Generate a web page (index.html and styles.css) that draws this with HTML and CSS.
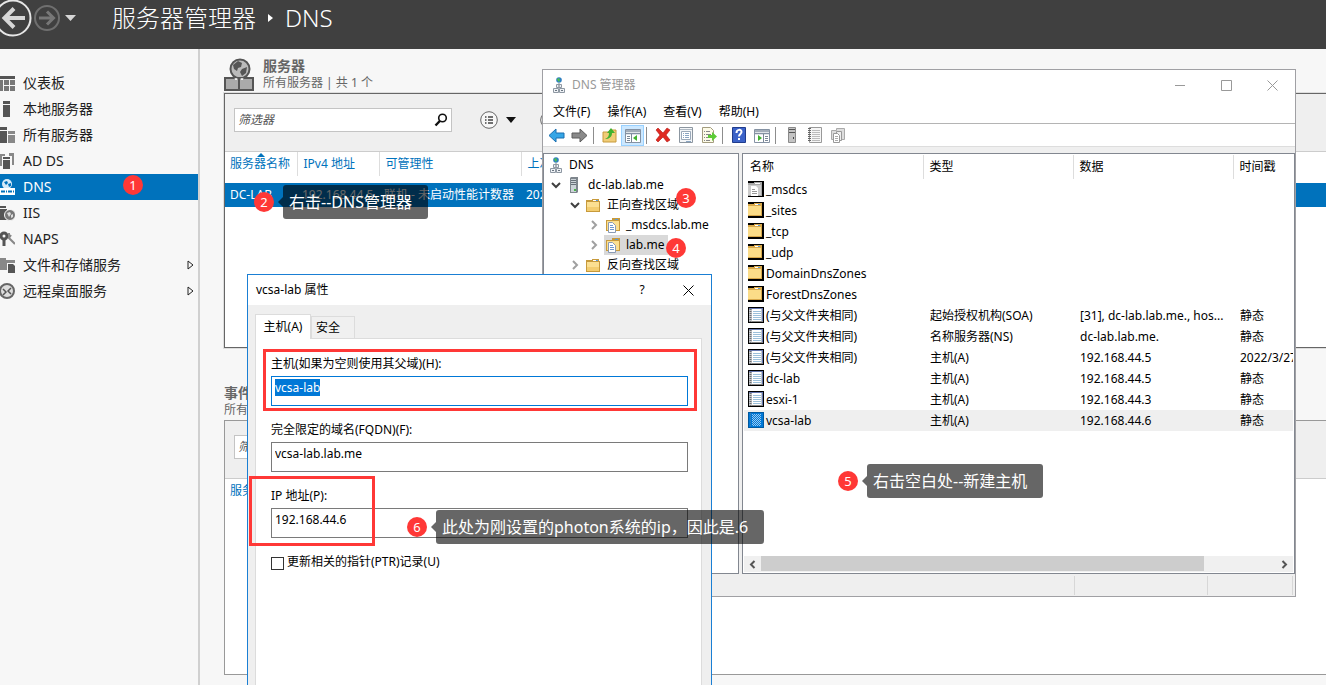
FILE: index.html
```html
<!DOCTYPE html>
<html lang="zh-CN">
<head>
  <meta charset="utf-8">
  <title>服务器管理器</title>
  <link rel="stylesheet" href="styles.css">
</head>
<body>

  <!-- icons -->
  <svg class="defs" aria-hidden="true">
    <symbol id="i-folder" viewBox="0 0 16 16">
      <path d="M1 3h6V2h7v2h1v11H1z" fill="#c79a3c"/>
      <path d="M2 5h12v9H2z" fill="#fbdf91"/>
      <path d="M2 10h12v4H2z" fill="#f3cd70"/>
      <path d="M8 3h5v1H8z" fill="#fff"/>
      <path d="M11 3h2v1h-2z" fill="#5c9bd6"/>
    </symbol>
    <symbol id="i-zone" viewBox="0 0 16 16">
      <path d="M1 3h6V1h8v13H1z" fill="#c79a3c"/>
      <path d="M2 4h12v9H2z" fill="#fbdf91"/>
      <path d="M10 2h3v1h-3z" fill="#5c9bd6"/>
      <path d="M3.500 5.500h4l3 3v7h-7z" fill="#fff" stroke="#8a9bb5"/>
      <path d="M5 8.500h3M5 10.500h4M5 12.500h4" stroke="#6f98cf"/>
    </symbol>
    <symbol id="i-dns" viewBox="0 0 16 16">
      <circle cx="8" cy="3" r="2.800" fill="#2f7fc0"/>
      <path d="M6 2l2-1 1 2-1 2-1-1z" fill="#4cc04c"/>
      <path d="M8 6v2M4 12v-1M12 12v-1" stroke="#888"/>
      <path d="M5.500 7.500h5v3h-5zM2.500 11.500h5v4h-5zM8.500 11.500h5v4h-5z" fill="#eef1f5" stroke="#8e98a3"/>
      <path d="M7 9h2M4 13.500h2M10 13.500h2" stroke="#6a7580"/>
    </symbol>
    <symbol id="i-server" viewBox="0 0 16 16">
      <path d="M4 1l1-1h7v15l-1 1H4z" fill="#7e868d"/>
      <path d="M5 2h5v13H5z" fill="#ccd3d8"/>
      <path d="M5 3.500h5M5 5.500h5M5 7.500h5" stroke="#69727a"/>
      <path d="M8 12h2v2H8z" fill="#48b54a"/>
    </symbol>
    <symbol id="i-cfolder" viewBox="0 0 16 16">
      <path d="M0 0h16v16H0z" fill="#000"/>
      <path d="M0 2h6V1h8v13H0z" fill="#d8a84a"/>
      <path d="M0 4h13v9H0z" fill="#fbdc88"/>
      <path d="M7 2h5v1H7z" fill="#fff"/>
      <path d="M10 2h2v1h-2z" fill="#5c9bd6"/>
    </symbol>
    <symbol id="i-cmsdcs" viewBox="0 0 16 16">
      <path d="M0 0h16v16H0z" fill="#000"/>
      <path d="M0 2h6V1h8v14H0z" fill="#a8a8a8"/>
      <path d="M0 4h13v10H0z" fill="#ccc"/>
      <path d="M7 2h5v1H7z" fill="#fff"/>
      <path d="M3 5h5l2 2v8H3z" fill="#fff"/>
      <path d="M4 8.500h3M4 10.500h5M4 12.500h5" stroke="#999"/>
    </symbol>
    <symbol id="i-record" viewBox="0 0 16 16">
      <path d="M0 0h16v16H0z" fill="#000"/>
      <path d="M1 1h14v14H1z" fill="#6577b0"/>
      <path d="M1 2h13v13H1z" fill="#c4c8ce"/>
      <path d="M4 2h9v13H4z" fill="#fff"/>
      <path d="M5 4.500h8M5 6.500h8M5 8.500h8M5 10.500h8M5 12.500h8" stroke="#9cc0da"/>
      <path d="M2.500 2v13" stroke="#707070" stroke-width="2" stroke-dasharray="1 1"/>
      <path d="M4 14.500h11" stroke="#888"/>
    </symbol>
    <pattern id="dots" width="2" height="2" patternUnits="userSpaceOnUse">
      <path d="M0 0h2v2H0z" fill="#0078d7"/><path d="M0 0h1v1H0zM1 1h1v1H1z" fill="#fff" fill-opacity=".6"/>
    </pattern>
    <symbol id="i-selected" viewBox="0 0 16 16">
      <path d="M0 0h16v16H0z" fill="#0078d7"/>
      <path d="M4 2h9v12H4z" fill="url(#dots)"/>
      <path d="M.5.5h15v15H.5z" fill="none" stroke="#013a69" stroke-dasharray="1 1"/>
      <path d="M2.500 1v14" stroke="#4a7da8" stroke-dasharray="1 1"/>
    </symbol>
    <symbol id="i-open" viewBox="0 0 16 16"><path d="M4 6l4 4 4-4" fill="none" stroke="#404040" stroke-width="2"/></symbol>
    <symbol id="i-closed" viewBox="0 0 16 16"><path d="M6 4l4 4-4 4" fill="none" stroke="#a0a0a0" stroke-width="2"/></symbol>
    <symbol id="i-expand" viewBox="0 0 7 10"><path d="M1 1l5 4-5 4z" fill="none" stroke="#222"/></symbol>
    <symbol id="i-search" viewBox="0 0 14 14"><circle cx="8.500" cy="5" r="3.800" fill="none" stroke="#111" stroke-width="1.600"/><path d="M5.800 8L1.500 12.500" stroke="#111" stroke-width="2.400"/></symbol>
    <symbol id="i-list" viewBox="0 0 18 18"><circle cx="9" cy="9" r="8.300" fill="#f7f7f7" stroke="#666"/><path d="M5 6h1.500M8 6h5M5 9h1.500M8 9h5M5 12h1.500M8 12h5" stroke="#444" stroke-width="1.500"/></symbol>
  </svg>

  <header class="topbar">
    <button class="nav-btn" aria-label="后退">
      <svg width="33" height="38" viewBox="0 0 33 38"><circle cx="13" cy="18" r="17.500" fill="none" stroke="#e6e6e6" stroke-width="2"/><path d="M25 18H5M14 8.500L4.500 18l9.500 9.500" fill="none" stroke="#d6d6d6" stroke-width="4"/></svg>
    </button>
    <button class="nav-btn" aria-label="前进">
      <svg width="28" height="38" viewBox="0 0 28 38"><circle cx="14" cy="18" r="12" fill="none" stroke="#6f6f6f" stroke-width="2"/><path d="M6 18h14M14 11.500l6.500 6.500-6.500 6.500" fill="none" stroke="#777" stroke-width="3"/></svg>
    </button>
    <button class="nav-btn nav-drop" aria-label="历史记录">
      <svg width="11" height="38" viewBox="0 0 11 38"><path d="M0 15h11l-5.500 6z" fill="#d6d6d6"/></svg>
    </button>
    <h1 class="crumbs">
      <span>服务器管理器</span>
      <svg width="5" height="8" viewBox="0 0 5 8"><path d="M0 0l5 4-5 4z" fill="#fff"/></svg>
      <span>DNS</span>
    </h1>
  </header>

  <div class="main">
    <nav class="sidebar">
      <a class="side-item" href="#">
        <svg width="15" height="16" viewBox="0 0 15 16"><path d="M0 1h15v3H0z" fill="#555"/><path d="M0 5h3v11H0zM4 5h5v5H4zM10 5h5v5h-5zM4 11h5v5H4zM10 11h5v5h-5z" fill="#777"/></svg>
        仪表板</a>
      <a class="side-item" href="#">
        <svg width="15" height="16" viewBox="0 0 15 16"><path d="M3 0h7v3H3zM3 4h7v12H3z" fill="#555"/></svg>
        本地服务器</a>
      <a class="side-item" href="#">
        <svg width="15" height="16" viewBox="0 0 15 16"><path d="M0 0h7v3H0zM0 4h7v12H0z" fill="#555"/><path d="M8 4h7v3H8zM8 8h7v8H8z" fill="#888"/></svg>
        所有服务器</a>
      <a class="side-item" href="#">
        <svg width="15" height="16" viewBox="0 0 15 16"><path d="M0 1h5v2H2v10H0zM9 0h5v12h-2V3H9z" fill="#888"/><path d="M3 4h7v2H3zM3 7h7v9H3z" fill="#555"/></svg>
        AD DS</a>
      <a class="side-item active" href="#">
        <svg width="15" height="16" viewBox="0 0 15 16"><circle cx="7" cy="5" r="5" fill="#d7ebf9"/><path d="M4 3l3-1 1 2-2 2zM8 5l3-1v3l-2 1z" fill="#0072bc"/><path d="M0 9h15v7H0z" fill="#fff"/><path d="M1 12.500h6M8 12.500h6" stroke="#0072bc" stroke-width="2" stroke-dasharray="4 1"/></svg>
        DNS</a>
      <a class="side-item" href="#">
        <svg width="15" height="16" viewBox="0 0 15 16"><path d="M0 1h6v2H0zM0 4h7v11H0z" fill="#555"/><circle cx="10" cy="10" r="5.500" fill="#777" stroke="#f7f7f7"/><path d="M7 8l3-1 1 2-2 3zM11 10l2-1v3l-2 1z" fill="#ddd"/></svg>
        IIS</a>
      <a class="side-item" href="#">
        <svg width="15" height="16" viewBox="0 0 15 16"><circle cx="4" cy="5" r="3" fill="none" stroke="#555" stroke-width="3"/><path d="M4 7v8" stroke="#555" stroke-width="3"/><path d="M9 2v5l6 6M9 7l2-3" fill="none" stroke="#888" stroke-width="2"/></svg>
        NAPS</a>
      <a class="side-item" href="#">
        <svg width="15" height="16" viewBox="0 0 15 16"><path d="M0 1h6v2h9v3H0zM0 5h7v8H0z" fill="#888"/><path d="M8 7h5l2 2v7H8z" fill="#555"/></svg>
        文件和存储服务
        <svg class="expand" width="7" height="10"><use href="#i-expand"/></svg></a>
      <a class="side-item" href="#">
        <svg width="15" height="16" viewBox="0 0 15 16"><circle cx="7" cy="8" r="7" fill="#ddd" stroke="#666" stroke-width="2"/><path d="M3 6l3 3-3 3M11 5L8 8l3 3" fill="none" stroke="#555" stroke-width="1.500"/></svg>
        远程桌面服务
        <svg class="expand" width="7" height="10"><use href="#i-expand"/></svg></a>
    </nav>

    <main class="content">
      <section>
        <div class="section-head">
          <svg width="30" height="33" viewBox="0 0 30 33">
            <circle cx="16" cy="11" r="9.500" fill="#bbb" stroke="#555" stroke-width="2"/>
            <path d="M9 7l5-4 4 2-1 4-3 1-1 3-3-2zM18 11l5-2-1 6-4 3-2-4z" fill="#555"/>
            <path d="M1 20h28v12H1zM15 20v12" fill="#aaa" stroke="#555" stroke-width="2"/>
            <path d="M11 20l1 2 1-2M17 20l1 2 1-2" stroke="#fff" fill="none"/>
          </svg>
          <div>
            <h2>服务器</h2>
            <p>所有服务器 | 共 1 个</p>
          </div>
        </div>
        <div class="panel">
          <div class="filter-bar">
            <label class="filter">
              <input type="text" placeholder="筛选器" aria-label="筛选器">
              <svg width="14" height="14"><use href="#i-search"/></svg>
            </label>
            <button class="round-btn" aria-label="筛选列表">
              <svg width="18" height="18"><use href="#i-list"/></svg>
              <svg width="10" height="6" viewBox="0 0 10 6"><path d="M0 0h10L5 6z" fill="#111"/></svg>
            </button>
            <button class="round-btn" aria-label="保存查询">
              <svg width="18" height="18"><use href="#i-list"/></svg>
            </button>
          </div>
          <table class="servers">
            <colgroup><col class="c-name"><col class="c-ip"><col class="c-state"><col></colgroup>
            <thead>
              <tr><th class="sorted">服务器名称</th><th>IPv4 地址</th><th>可管理性</th><th>上次更新</th></tr>
            </thead>
            <tbody>
              <tr><td>DC-LAB</td><td>192.168.44.5</td><td>联机 - 未启动性能计数器</td><td>2022/3/27</td></tr>
            </tbody>
          </table>
        </div>
      </section>

      <section>
        <div class="section-head events-head">
          <div>
            <h2>事件</h2>
            <p>所有事件</p>
          </div>
        </div>
        <div class="panel events">
          <div class="filter-bar">
            <label class="filter">
              <input type="text" placeholder="筛选器" aria-label="筛选事件">
            </label>
          </div>
          <table class="servers">
            <thead><tr><th>服务器名称</th></tr></thead>
          </table>
        </div>
      </section>
    </main>
  </div>

  <!-- DNS manager window -->
  <div class="window dns-window">
    <div class="titlebar">
      <svg width="16" height="16"><use href="#i-dns"/></svg>
      <span>DNS 管理器</span>
      <div class="win-buttons">
        <button aria-label="最小化"><svg width="11" height="11" viewBox="0 0 11 11"><path d="M0 5.500h10" stroke="#999"/></svg></button>
        <button aria-label="最大化"><svg width="11" height="11" viewBox="0 0 11 11"><path d="M.5.5h10v10H.5z" fill="none" stroke="#999"/></svg></button>
        <button aria-label="关闭"><svg width="11" height="11" viewBox="0 0 11 11"><path d="M.5.5l10 10M10.500.5l-10 10" stroke="#999"/></svg></button>
      </div>
    </div>
    <div class="menubar">
      <button>文件(F)</button>
      <button>操作(A)</button>
      <button>查看(V)</button>
      <button>帮助(H)</button>
    </div>
    <div class="toolbar">
      <button aria-label="后退"><svg width="17" height="16" viewBox="0 0 17 16"><path d="M8 2v4h8v5H8v4L1 8.500z" fill="#35a6e6" stroke="#1a6fb0"/></svg></button>
      <button aria-label="前进"><svg width="17" height="16" viewBox="0 0 17 16"><path d="M9 2v4H1v5h8v4l7-6.500z" fill="#8a8a8a" stroke="#5c5c5c"/></svg></button>
      <i></i>
      <button aria-label="上一级"><svg width="16" height="16" viewBox="0 0 16 16"><path d="M1 5h6l1-2h6v12H1z" fill="#f0cc77" stroke="#c79a3c"/><path d="M3 12c3-1 4-3 4-6H5l4-5 4 5h-3c0 4-3 6-7 6z" fill="#41b22f"/></svg></button>
      <button class="on" aria-label="控制台树"><svg width="16" height="16" viewBox="0 0 16 16"><path d="M.5 2.500h15v13H.5z" fill="#fff" stroke="#8592a3"/><path d="M0 4h16M0 6.500h16" stroke="#8592a3" stroke-width="1.500"/><path d="M6.500 7v8M2 9.500h3M2 11.500h3M2 13.500h3" stroke="#7a8796"/><path d="M12 8v6l-4-3z" fill="#41b22f"/></svg></button>
      <i></i>
      <button aria-label="删除"><svg width="16" height="16" viewBox="0 0 16 16"><path d="M3 1l5 5 4-5 3 2-4 5 4 5-3 2-4-5-5 5-2-2 4-5-4-5z" fill="#e02a22" stroke="#b3140f" stroke-width=".6"/></svg></button>
      <button aria-label="属性"><svg width="16" height="16" viewBox="0 0 16 16"><path d="M1.500.5h13v15h-13z" fill="#f4f6f8" stroke="#8c96a0"/><path d="M2 2.500h12" stroke="#aeb8c2"/><path d="M3.500 4.500h9v8h-9z" fill="#fff" stroke="#9aa8b8"/><path d="M5 6.500h1M7 6.500h4M5 8.500h1M7 8.500h4M5 10.500h1M7 10.500h4M8 14.500h5" stroke="#8aa5c2"/></svg></button>
      <button aria-label="导出列表"><svg width="16" height="16" viewBox="0 0 16 16"><path d="M1.500.5h8l3 3v12h-11z" fill="#fdfbe8" stroke="#a39c7e"/><path d="M3 4.500h1M5 4.500h4M3 7.500h1M5 7.500h5M3 10.500h1M5 10.500h3M3 13.500h1M5 13.500h4" stroke="#888"/><path d="M7 8h4V5l5 4.500-5 4.500v-3H7z" fill="#5ccb35"/></svg></button>
      <i></i>
      <button aria-label="帮助"><svg width="14" height="16" viewBox="0 0 14 16"><path d="M.5.5h13v15H.5z" fill="#3b62c8" stroke="#203c8c"/><path d="M4.500 6c0-4 5-4 5-1 0 2-2.500 2-2.500 4.500M7 11v2" fill="none" stroke="#fff" stroke-width="2"/></svg></button>
      <button aria-label="操作窗格"><svg width="16" height="16" viewBox="0 0 16 16"><path d="M.5 2.500h15v13H.5z" fill="#fff" stroke="#8592a3"/><path d="M0 4h16M0 6.500h16" stroke="#8592a3" stroke-width="1.500"/><path d="M9.500 7v8M11 9.500h3M11 11.500h3M11 13.500h3" stroke="#7a8796"/><path d="M4 8v6l4-3z" fill="#41b22f"/></svg></button>
      <i></i>
      <button aria-label="新建服务器"><svg width="16" height="16" viewBox="0 0 16 16"><path d="M4.500.5h7v15h-7z" fill="#c4c4c4" stroke="#8a8a8a"/><path d="M5 2.500h6M5 5.500h6" stroke="#555"/><path d="M9 10h1v2H9z" fill="#444"/></svg></button>
      <button aria-label="新建记录"><svg width="16" height="16" viewBox="0 0 16 16"><path d="M2.500.5h12v15h-12z" fill="#f6f6f6" stroke="#999"/><path d="M5 3.500h8M5 5.500h8M5 7.500h8M5 9.500h8M5 11.500h8M5 13.500h8" stroke="#bbb"/><path d="M2.500 1v14" stroke="#666" stroke-width="3" stroke-dasharray="1 1"/></svg></button>
      <button aria-label="新建区域"><svg width="16" height="16" viewBox="0 0 16 16"><path d="M1.500 3.500h5v-2h8v11h-13z" fill="#ddd" stroke="#aaa"/><path d="M6.500 4.500h5v9h-5z" fill="#eee" stroke="#999"/><path d="M3.500 6.500h4l2 2v7h-6z" fill="#fff" stroke="#999"/><path d="M5 9.500h3M5 11.500h3M5 13.500h3" stroke="#aaa"/></svg></button>
    </div>
    <div class="panes">
      <ul class="tree">
        <li><svg width="16" height="16"><use href="#i-dns"/></svg><span>DNS</span></li>
        <li><svg class="chev" width="16" height="16"><use href="#i-open"/></svg><svg width="16" height="16"><use href="#i-server"/></svg><span>dc-lab.lab.me</span></li>
        <li class="l2"><svg class="chev" width="16" height="16"><use href="#i-open"/></svg><svg width="16" height="16"><use href="#i-folder"/></svg><span>正向查找区域</span></li>
        <li class="l3"><svg class="chev" width="16" height="16"><use href="#i-closed"/></svg><div class="picked-off"><svg width="16" height="16"><use href="#i-zone"/></svg><span>_msdcs.lab.me</span></div></li>
        <li class="l3"><svg class="chev" width="16" height="16"><use href="#i-closed"/></svg><div class="picked"><svg width="16" height="16"><use href="#i-zone"/></svg><span>lab.me</span></div></li>
        <li class="l2"><svg class="chev" width="16" height="16"><use href="#i-closed"/></svg><svg width="16" height="16"><use href="#i-folder"/></svg><span>反向查找区域</span></li>
      </ul>
      <div class="list">
        <table class="records">
          <colgroup><col class="c-rec"><col class="c-type"><col class="c-data"><col></colgroup>
          <thead>
            <tr><th>名称</th><th>类型</th><th>数据</th><th>时间戳</th></tr>
          </thead>
          <tbody>
            <tr><td><svg width="16" height="16"><use href="#i-cmsdcs"/></svg>_msdcs</td><td></td><td></td><td></td></tr>
            <tr><td><svg width="16" height="16"><use href="#i-cfolder"/></svg>_sites</td><td></td><td></td><td></td></tr>
            <tr><td><svg width="16" height="16"><use href="#i-cfolder"/></svg>_tcp</td><td></td><td></td><td></td></tr>
            <tr><td><svg width="16" height="16"><use href="#i-cfolder"/></svg>_udp</td><td></td><td></td><td></td></tr>
            <tr><td><svg width="16" height="16"><use href="#i-cfolder"/></svg>DomainDnsZones</td><td></td><td></td><td></td></tr>
            <tr><td><svg width="16" height="16"><use href="#i-cfolder"/></svg>ForestDnsZones</td><td></td><td></td><td></td></tr>
            <tr><td><svg width="16" height="16"><use href="#i-record"/></svg>(与父文件夹相同)</td><td>起始授权机构(SOA)</td><td>[31], dc-lab.lab.me., hos...</td><td>静态</td></tr>
            <tr><td><svg width="16" height="16"><use href="#i-record"/></svg>(与父文件夹相同)</td><td>名称服务器(NS)</td><td>dc-lab.lab.me.</td><td>静态</td></tr>
            <tr><td><svg width="16" height="16"><use href="#i-record"/></svg>(与父文件夹相同)</td><td>主机(A)</td><td>192.168.44.5</td><td>2022/3/27</td></tr>
            <tr><td><svg width="16" height="16"><use href="#i-record"/></svg>dc-lab</td><td>主机(A)</td><td>192.168.44.5</td><td>静态</td></tr>
            <tr><td><svg width="16" height="16"><use href="#i-record"/></svg>esxi-1</td><td>主机(A)</td><td>192.168.44.3</td><td>静态</td></tr>
            <tr class="selected"><td><svg width="16" height="16"><use href="#i-selected"/></svg>vcsa-lab</td><td>主机(A)</td><td>192.168.44.6</td><td>静态</td></tr>
          </tbody>
        </table>
        <div class="scrollbar">
          <button aria-label="向左滚动"><svg width="7" height="9" viewBox="0 0 7 9"><path d="M5.500 1L2 4.500 5.500 8" fill="none" stroke="#555" stroke-width="2"/></svg></button>
          <div class="track"><div class="thumb"></div></div>
          <button aria-label="向右滚动"><svg width="7" height="9" viewBox="0 0 7 9"><path d="M1.500 1L5 4.500 1.500 8" fill="none" stroke="#555" stroke-width="2"/></svg></button>
        </div>
      </div>
    </div>
    <div class="statusbar"><span></span><span></span><span></span></div>
  </div>

  <!-- host properties dialog -->
  <form class="window dialog">
    <div class="titlebar">
      <span>vcsa-lab 属性</span>
      <div class="win-buttons">
        <button type="button" aria-label="帮助">?</button>
        <button type="button" aria-label="关闭"><svg width="11" height="11" viewBox="0 0 11 11"><path d="M.5.5l10 10M10.500.5l-10 10" stroke="#000"/></svg></button>
      </div>
    </div>
    <div class="dialog-body">
      <div class="tabs">
        <button type="button" class="tab current">主机(A)</button>
        <button type="button" class="tab">安全</button>
      </div>
      <div class="tab-page">
        <label for="host">主机(如果为空则使用其父域)(H):</label>
        <input type="text" id="host" value="vcsa-lab" autofocus>
        <label for="fqdn">完全限定的域名(FQDN)(F):</label>
        <input type="text" id="fqdn" value="vcsa-lab.lab.me">
        <label for="ip">IP 地址(P):</label>
        <input type="text" id="ip" value="192.168.44.6">
        <div class="check">
          <input type="checkbox" id="ptr">
          <label for="ptr">更新相关的指针(PTR)记录(U)</label>
        </div>
      </div>
    </div>
  </form>

  <!-- step marks -->
  <div class="frame frame-host"></div>
  <div class="frame frame-ip"></div>
  <div class="step s1"><b>1</b></div>
  <div class="step s2"><b>2</b><span class="tip">右击--DNS管理器</span></div>
  <div class="step s3"><b>3</b></div>
  <div class="step s4"><b>4</b></div>
  <div class="step s5"><b>5</b><span class="tip">右击空白处--新建主机</span></div>
  <div class="step s6"><b>6</b><span class="tip">此处为刚设置的photon系统的ip，因此是.6</span></div>

  <script>
    const host = document.getElementById('host');
    host.focus();
    host.select();
  </script>
</body>
</html>
```
FILE: styles.css
```css
* {
  box-sizing: border-box;
}

body {
  margin: 0;
  height: 100vh;
  display: flex;
  flex-direction: column;
  position: relative;
  overflow: hidden;
  background: #f7f7f7;
  color: #000;
  font-family: "Noto Sans", "Noto Sans CJK SC", sans-serif;
  font-size: 12px;
  line-height: 16px;
}

button {
  font: inherit;
  color: inherit;
  padding: 0;
  border: none;
  background: none;
}

input {
  font: inherit;
}

h1, h2, p, ul {
  margin: 0;
  padding: 0;
}

svg {
  flex: none;
  display: block;
}

.defs {
  position: absolute;
  width: 0;
  height: 0;
}

/* top bar */
.topbar {
  flex: none;
  height: 49px;
  display: flex;
  align-items: flex-start;
  background: #404040;
  color: #fff;
}

.nav-drop {
  margin-left: 4px;
}

.crumbs {
  display: flex;
  align-items: center;
  gap: 12px;
  margin-left: 36px;
  font-size: 24px;
  font-weight: 300;
  line-height: 36px;
}

.main {
  flex: 1;
  display: flex;
}

/* sidebar */
.sidebar {
  width: 200px;
  flex: none;
  padding-top: 21px;
  border-right: 2px solid #d0d0d0;
}

.side-item {
  display: flex;
  align-items: center;
  gap: 8px;
  height: 26px;
  padding-right: 4px;
  color: #222;
  font-size: 14px;
  text-decoration: none;
}

.side-item.active {
  background: #0072bc;
  color: #fff;
}

.expand {
  margin-left: auto;
}

/* background panels */
.content {
  flex: 1;
  min-width: 0;
  padding-left: 24px;
}

.section-head {
  display: flex;
  align-items: flex-end;
  gap: 9px;
  height: 44px;
  padding-bottom: 2px;
  color: #666;
}

.events-head {
  height: 72px;
}

.section-head h2 {
  font-size: 14px;
  line-height: 18px;
}

.panel {
  height: 255px;
  border: 1px solid #666;
  border-right: none;
  background: #fff;
  box-shadow: 0 0 0 1px #ddd;
}

.panel.events {
  border-color: #999;
  box-shadow: none;
}

.filter-bar {
  display: flex;
  align-items: flex-start;
  height: 58px;
  padding: 14px 9px;
  border-bottom: 1px solid #ccc;
  background: #efefef;
}

.filter {
  display: flex;
  align-items: center;
  width: 218px;
  height: 24px;
  margin-right: 28px;
  padding: 0 3px;
  border: 1px solid #c4c4c4;
  background: #fff;
}

.filter input {
  flex: 1;
  min-width: 0;
  padding: 0;
  border: none;
  outline: none;
}

.filter input::placeholder {
  color: #555;
  font-style: italic;
}

.round-btn {
  display: flex;
  align-items: center;
  gap: 8px;
  height: 24px;
  margin-right: 24px;
}

.servers, .records {
  width: 100%;
  table-layout: fixed;
  border-collapse: collapse;
}

.servers th, .servers td {
  padding: 0 5px;
  text-align: left;
  font-weight: normal;
  white-space: nowrap;
}

.servers th {
  position: relative;
  height: 24px;
  color: #0072bc;
  border-right: 1px solid #ddd;
}

.servers th:last-child {
  border-right: none;
}

.servers thead::after {
  content: "";
  display: block;
  height: 7px;
}

.sorted::before {
  content: "";
  position: absolute;
  left: 32px;
  top: 1px;
  border: 4px solid transparent;
  border-top: none;
  border-bottom-color: #0072bc;
}

.servers th + th {
  padding-left: 6px;
}

.servers td {
  height: 24px;
  background: #0072bc;
  color: #fff;
}

.c-name {
  width: 72px;
}

.c-ip {
  width: 82px;
}

.c-state {
  width: 142px;
}

/* windows */
.window {
  position: absolute;
  display: flex;
  flex-direction: column;
  background: #efefef;
}

.dns-window {
  left: 542px;
  top: 69px;
  right: 30px;
  height: 528px;
  border: 1px solid #a0a0a4;
}

.titlebar {
  display: flex;
  align-items: center;
  gap: 5px;
  height: 30px;
  padding-left: 8px;
  background: #fff;
}

.dns-window .titlebar {
  color: #999;
}

.win-buttons {
  display: flex;
  margin-left: auto;
}

.win-buttons button {
  display: flex;
  align-items: center;
  justify-content: center;
  width: 46px;
  height: 29px;
}

.menubar {
  display: flex;
  gap: 17px;
  height: 24px;
  padding-left: 10px;
  border-bottom: 1px solid #b4b4b4;
  background: #fff;
}

.toolbar {
  display: flex;
  align-items: center;
  height: 23px;
  padding-left: 2px;
  border-bottom: 1px solid #ddd;
  background: #fff;
}

.toolbar button {
  display: flex;
  align-items: center;
  justify-content: center;
  width: 23px;
  height: 21px;
}

.toolbar .on {
  border: 1px solid #99d1ff;
  background: #cce8ff;
}

.toolbar i {
  width: 1px;
  height: 17px;
  margin: 0 4px 0 2px;
  background: #8d8d8d;
}

.panes {
  flex: 1;
  display: flex;
  gap: 3px;
  min-height: 0;
  padding-top: 6px;
}

.tree {
  width: 196px;
  padding-top: 1px;
  border: 1px solid #828790;
  background: #fff;
  list-style: none;
}

.tree li {
  display: flex;
  align-items: center;
  height: 20px;
  padding-left: 4px;
  white-space: nowrap;
}

.tree .l2 {
  padding-left: 23px;
}

.tree .l3 {
  padding-left: 42px;
}

.tree span {
  margin-left: 5px;
}

.tree .chev {
  margin-right: 2px;
}

.tree .chev + svg {
  margin-right: 1px;
}

.picked, .picked-off {
  display: flex;
  align-items: center;
  height: 20px;
  padding: 0 4px 0 1px;
}

.picked {
  background: #d9d9d9;
}

.list {
  flex: 1;
  display: flex;
  flex-direction: column;
  justify-content: space-between;
  min-width: 0;
  padding: 1px;
  border: 1px solid #828790;
  background: #fff;
}

.records th, .records td {
  height: 21px;
  padding: 0 0 0 6px;
  overflow: hidden;
  text-align: left;
  font-weight: normal;
  white-space: nowrap;
}

.records th {
  height: 24px;
  border-right: 1px solid #ddd;
}

.records th:last-child {
  border-right: none;
}

.records td {
  padding-left: 7px;
}

.records td:first-child {
  padding-left: 4px;
}

.records td svg {
  display: inline-block;
  margin-right: 2px;
  vertical-align: -3px;
}

.selected {
  background: #efefef;
}

.c-rec {
  width: 179px;
}

.c-type {
  width: 150px;
}

.c-data {
  width: 160px;
}

.scrollbar {
  display: flex;
  height: 16px;
  background: #f0f0f0;
}

.scrollbar button {
  display: flex;
  align-items: center;
  justify-content: center;
  width: 17px;
}

.track {
  flex: 1;
}

.thumb {
  width: 86%;
  height: 15px;
  background: #cdcdcd;
}

.statusbar {
  display: flex;
  height: 22px;
  padding: 2px 2px 1px 0;
}

.statusbar span {
  width: 85px;
  border-right: 1px solid #d7d7d7;
}

.statusbar span:first-child {
  flex: 1;
}

.statusbar span:nth-child(2) {
  width: 133px;
}

/* properties dialog */
.dialog {
  left: 247px;
  top: 274px;
  bottom: 0;
  width: 465px;
  border: 1px solid #1a7fd4;
  border-bottom: none;
}

.dialog-body {
  flex: 1;
  display: flex;
  flex-direction: column;
  padding: 9px 9px 0 7px;
}

.tabs {
  display: flex;
  align-items: flex-end;
  height: 24px;
}

.tab {
  width: 44px;
  height: 22px;
  padding-right: 10px;
  border: 1px solid #dcdcdc;
  border-bottom: none;
  background: #f0f0f0;
}

.tab.current {
  width: 56px;
  height: 25px;
  margin-bottom: -1px;
  padding: 0;
  background: #fff;
  z-index: 1;
}

.tab-page {
  flex: 1;
  padding: 17px 13px 0 15px;
  border: 1px solid #dcdcdc;
  border-bottom: none;
  background: #fff;
}

.tab-page > label {
  display: block;
  margin-bottom: 4px;
}

.tab-page > input {
  display: block;
  width: 100%;
  height: 30px;
  margin-bottom: 16px;
  padding: 2px 3px 9px;
  border: 1px solid #7a7a7a;
  outline: none;
}

.tab-page > input:focus {
  border-color: #0078d7;
}

.tab-page > input::selection {
  background: #0078d7;
  color: #fff;
}

.check {
  display: flex;
  align-items: center;
  gap: 3px;
}

.check input {
  appearance: none;
  width: 13px;
  height: 13px;
  margin: 2px 0 0;
  border: 1px solid #333;
  background: #fff;
}

/* step marks */
.frame {
  position: absolute;
  border: 3px solid #ff3836;
  pointer-events: none;
}

.frame-host {
  left: 263px;
  top: 349px;
  width: 434px;
  height: 62px;
}

.frame-ip {
  left: 249px;
  top: 476px;
  width: 126px;
  height: 70px;
}

.step {
  position: absolute;
  display: flex;
  align-items: center;
  gap: 9px;
  height: 34px;
  white-space: nowrap;
}

.step b {
  width: 20px;
  height: 20px;
  border-radius: 50%;
  background: #ff3836;
  color: #fff;
  font-size: 13px;
  font-weight: normal;
  line-height: 20px;
  text-align: center;
}

.tip {
  position: relative;
  height: 34px;
  padding: 0 16px 0 6px;
  border-radius: 3px;
  background: rgba(0, 0, 0, 0.6);
  color: #fff;
  font-size: 16px;
  line-height: 34px;
}

.tip::before {
  content: "";
  position: absolute;
  right: 100%;
  top: 12px;
  border: 5px solid transparent;
  border-left: none;
  border-right-color: rgba(0, 0, 0, 0.6);
}

.s1 {
  left: 123px;
  top: 168px;
}

.s2 {
  left: 254px;
  top: 185px;
}

.s3 {
  left: 676px;
  top: 181px;
}

.s4 {
  left: 666px;
  top: 231px;
}

.s5 {
  left: 838px;
  top: 464px;
}

.s6 {
  left: 407px;
  top: 510px;
}
```
